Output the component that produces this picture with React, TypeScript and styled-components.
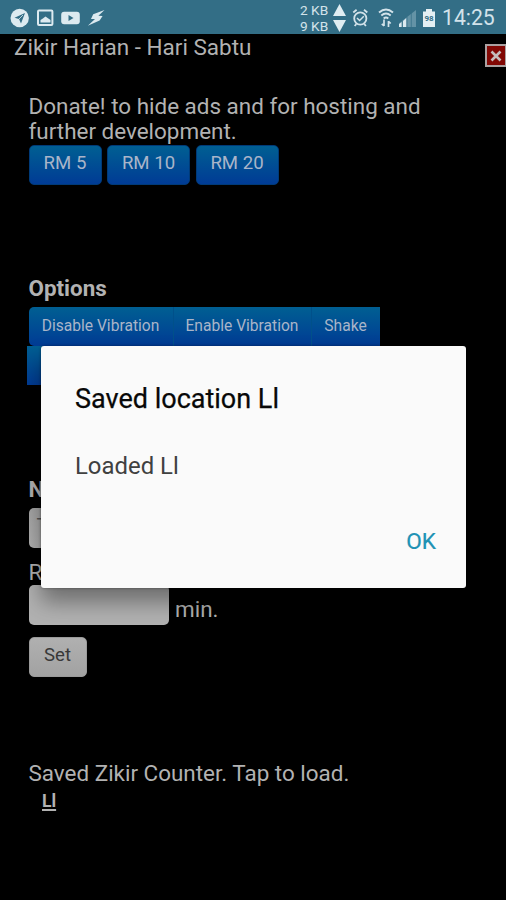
import React from 'react';
import styled, { createGlobalStyle } from 'styled-components';

const GlobalStyle = createGlobalStyle`
  * { box-sizing: border-box; }
  html, body { margin: 0; background: #000; }
  body { font-family: Roboto, sans-serif; overflow: hidden; }
`;

const Screen = styled.div`
  position: relative;
  display: flex;
  flex-direction: column;
  width: 506px;
  height: 900px;
  overflow: hidden;
  background: #000;
  color: #b2b2b2;
`;

const StatusBar = styled.header`
  display: flex;
  justify-content: space-between;
  height: 34px;
  flex: none;
  background: #336e86;
  color: #d3e3ea;
`;

const LeftIcons = styled.div`
  display: flex;
  align-items: center;
  padding: 1px 0 0 10px;
  svg { display: block; }
`;

const RightIcons = styled.div`
  display: flex;
  align-items: center;
  padding: 1px 10px 0 0;
  svg { display: block; }
`;

const Traffic = styled.div`
  display: grid;
  grid-template-columns: 33px 13px;
  grid-template-rows: 16px 16px;
  align-items: center;
  margin-right: 6px;
  font-size: 13.7px;
  line-height: 16px;
  white-space: nowrap;
`;

const Clock = styled.span`
  width: 54px;
  margin-left: 6px;
  padding-top: 1px;
  font-size: 21.2px;
  line-height: 32px;
  white-space: nowrap;
`;

const TitleBar = styled.div`
  display: flex;
  justify-content: space-between;
  height: 60px;
  flex: none;
  padding-left: 14px;
`;

const Title = styled.h1`
  margin: 0;
  font-size: 22.5px;
  font-weight: 400;
  line-height: 26px;
  white-space: nowrap;
`;

const CloseButton = styled.button`
  display: flex;
  align-items: center;
  justify-content: center;
  width: 21px;
  height: 23px;
  margin-top: 10px;
  padding: 0;
  border: 2px solid #aaa1a1;
  border-right-width: 1px;
  background: #820804;
`;

const Page = styled.main`
  display: flex;
  flex-direction: column;
  align-items: flex-start;
  padding-left: 28.5px;
`;

const Text = styled.p<{ $lh?: number }>`
  margin: 0;
  font-size: 22.45px;
  line-height: ${p => p.$lh ?? 25}px;
  white-space: nowrap;
`;

const Heading = styled.h2`
  margin: 0;
  font-size: 22.4px;
  font-weight: 700;
  line-height: 26px;
`;

const DonateRow = styled.div`
  display: flex;
  gap: 5.5px;
  margin: 1px 0 90px;
`;

const DonateButton = styled.button<{ $w: number }>`
  width: ${p => p.$w}px;
  height: 40px;
  padding: 0 0 4px;
  border: 1px solid #003a78;
  border-radius: 5px;
  background: linear-gradient(#005f92, #003b95);
  color: #a9b5c9;
  font: 400 18.6px Roboto, sans-serif;
  white-space: nowrap;
`;

const OptionRow = styled.div`
  display: flex;
  margin-top: 6px;
`;

const OptionButton = styled.button<{ $w: number; $first?: boolean }>`
  width: ${p => p.$w}px;
  height: 39px;
  padding: 0 0 2px;
  border: 0;
  border-left: ${p => (p.$first ? '0' : '1px solid #00508a')};
  border-radius: ${p => (p.$first ? '5px 0 0 5px' : '0')};
  background: linear-gradient(#005f92, #003b95);
  color: #a9b5c9;
  font: 400 15.6px Roboto, sans-serif;
  white-space: nowrap;
`;

const WrappedOption = styled.div`
  width: 120px;
  height: 39px;
  margin: 0 0 91px -2px;
  background: linear-gradient(#005f92, #003b95);
`;

const Select = styled.div`
  width: 140px;
  height: 40px;
  margin: 6px 0 11px;
  padding: 0 8px;
  border-radius: 5px;
  background: linear-gradient(#a4a4a4, #b0b0b0);
  color: #555;
  font-size: 20px;
  line-height: 36px;
`;

const MinuteRow = styled.div`
  display: flex;
  align-items: center;
  gap: 6.5px;
  height: 40px;
`;

const MinuteLabel = styled(Text)`
  padding-top: 8px;
`;

const MinuteInput = styled.input`
  width: 140px;
  height: 40px;
  border: 0;
  border-radius: 5px;
  background: #b1b1b1;
`;

const SetButton = styled.button`
  width: 58px;
  height: 40px;
  margin: 12px 0 84px;
  padding: 0 0 4px;
  border: 1px solid #9a9a9a;
  border-radius: 5px;
  background: linear-gradient(#b0b0b0, #a2a2a2);
  color: #383838;
  font: 400 18.6px Roboto, sans-serif;
`;

const SavedLink = styled.a`
  margin: 5px 0 0 13.5px;
  color: #b2b2b2;
  font-size: 17.5px;
  font-weight: 700;
  line-height: 20px;
  text-decoration: underline;
  text-decoration-thickness: 1.5px;
  text-underline-offset: 2px;
`;

const Dialog = styled.section`
  position: absolute;
  left: 41px;
  top: 346px;
  display: flex;
  flex-direction: column;
  width: 425px;
  height: 242px;
  padding: 37px 30px 0 34px;
  border-radius: 3px;
  background: #fafafa;
  box-shadow: 0 14px 22px rgba(0, 0, 0, 0.38), 0 0 3px rgba(0, 0, 0, 0.4);
`;

const DialogTitle = styled.h2`
  margin: 0;
  color: #080808;
  font-size: 27px;
  font-weight: 400;
  line-height: 32px;
  white-space: nowrap;
  -webkit-text-stroke: 0.25px #080808;
`;

const DialogBody = styled.p`
  margin: 36px 0 0;
  color: #404040;
  font-size: 23.9px;
  line-height: 31px;
`;

const DialogAction = styled.button`
  align-self: flex-end;
  margin-top: 46px;
  padding: 0;
  border: 0;
  background: none;
  color: #2092b4;
  font: 400 22.6px/28px Roboto, sans-serif;
  -webkit-text-stroke: 0.2px #2092b4;
`;

const BAR = '#336e86';

function Notifications() {
  return (
    <LeftIcons>
      <svg width="98" height="22" viewBox="0 0 98 22" fill="#dceaf0">
        <circle cx="9.7" cy="11" r="9.2" />
        <path d="M4.5 10.7 15 6l-4 10.6-2-4.5z" fill={BAR} />
        <path d="m9 12 4-4" stroke="#dceaf0" strokeWidth=".8" />
        <rect x="28" y="3.6" width="14.4" height="14.4" rx="1" fill="none" stroke="#dceaf0" strokeWidth="2" />
        <path d="M30.5 15.5v-2.5l2-1.2 3-2.3 2.5 1.8 2.5 1.7v2.5z" />
        <rect x="51.2" y="4.7" width="18.6" height="12.6" rx="3" />
        <path d="m58.5 8 5 3-5 3z" fill={BAR} />
        <path d="M94.5 3 83.2 7.2 81 12l4 .1-7.2 6.6 11.8-5.3 3-4.4-4.2-.3z" />
      </svg>
    </LeftIcons>
  );
}

function Arrow({ down = false }: { down?: boolean }) {
  return (
    <svg width="13" height="12" viewBox="0 0 13 12" fill="#e0edf2">
      <path d={down ? 'M0 0h13L6.5 12z' : 'M6.5 0 13 12H0z'} />
    </svg>
  );
}

function SystemStatus() {
  return (
    <RightIcons>
      <Traffic>
        <span>2 KB</span>
        <Arrow />
        <span>9 KB</span>
        <Arrow down />
      </Traffic>
      <svg width="70" height="24" viewBox="350 5 70 24" fill="none" stroke="#d3e3ea">
        <circle cx="358.3" cy="17.5" r="6.1" strokeWidth="1.8" />
        <path d="m351.3 11.5 3.3-2.8M365.3 11.5 362 8.7M354.3 23l-1.6 2M362.3 23l1.6 2" strokeWidth="1.8" />
        <path d="m355 17 2.6 2.5 4.2-4.2" strokeWidth="1.5" />
        <path d="M377 11.5q7-6 14 0M379.3 14.5q4.7-3.8 9.4 0M381.7 17.5q2.3-2 4.6 0" strokeWidth="1.9" />
        <path d="M382 18.5V25m-2.2-2.2L382 25M386.5 26v-6m0 .3 2.2 2.2" strokeWidth="1.7" />
        <path d="M397.5 26v-4L414 9v17z" fill="#6493a6" stroke="none" />
        <path d="M397 26v-3l2.7-2v5zM401 26v-6l3.3-3v9z" fill="#dceaf0" stroke="none" />
        <path d="M400.3 26v-6M405 26V16M409.3 26V12" stroke={BAR} strokeWidth=".7" />
      </svg>
      <svg width="14" height="24" viewBox="0 0 14 24">
        <path d="M4 3h6v2.5h3V21H1V5.5h3z" fill="#e4eff3" />
        <text x="7" y="15" textAnchor="middle" fontFamily="Roboto" fontSize="8" fontWeight="700" fill={BAR}>98</text>
      </svg>
      <Clock>14:25</Clock>
    </RightIcons>
  );
}

export default function App() {
  return (
    <>
      <GlobalStyle />
      <Screen>
        <StatusBar>
          <Notifications />
          <SystemStatus />
        </StatusBar>
        <TitleBar>
          <Title>Zikir Harian - Hari Sabtu</Title>
          <CloseButton aria-label="Close">
            <svg width="12" height="12" viewBox="0 0 12 12" stroke="#c5bcbc" strokeWidth="2.6">
              <path d="m1.5 1.5 9 9m0-9-9 9" />
            </svg>
          </CloseButton>
        </TitleBar>
        <Page>
          <Text>
            Donate! to hide ads and for hosting and
            <br />
            further development.
          </Text>
          <DonateRow>
            <DonateButton $w={73}>RM 5</DonateButton>
            <DonateButton $w={83}>RM 10</DonateButton>
            <DonateButton $w={83}>RM 20</DonateButton>
          </DonateRow>
          <Heading>Options</Heading>
          <OptionRow>
            <OptionButton $w={144} $first>Disable Vibration</OptionButton>
            <OptionButton $w={138}>Enable Vibration</OptionButton>
            <OptionButton $w={69}>Shake</OptionButton>
          </OptionRow>
          <WrappedOption />
          <Heading>N</Heading>
          <Select>T</Select>
          <Text $lh={26}>R</Text>
          <MinuteRow>
            <MinuteInput aria-label="Minutes" />
            <MinuteLabel>min.</MinuteLabel>
          </MinuteRow>
          <SetButton>Set</SetButton>
          <Text>Saved Zikir Counter. Tap to load.</Text>
          <SavedLink>Ll</SavedLink>
        </Page>
        <Dialog role="dialog">
          <DialogTitle>Saved location Ll</DialogTitle>
          <DialogBody>Loaded Ll</DialogBody>
          <DialogAction>OK</DialogAction>
        </Dialog>
      </Screen>
    </>
  );
}
